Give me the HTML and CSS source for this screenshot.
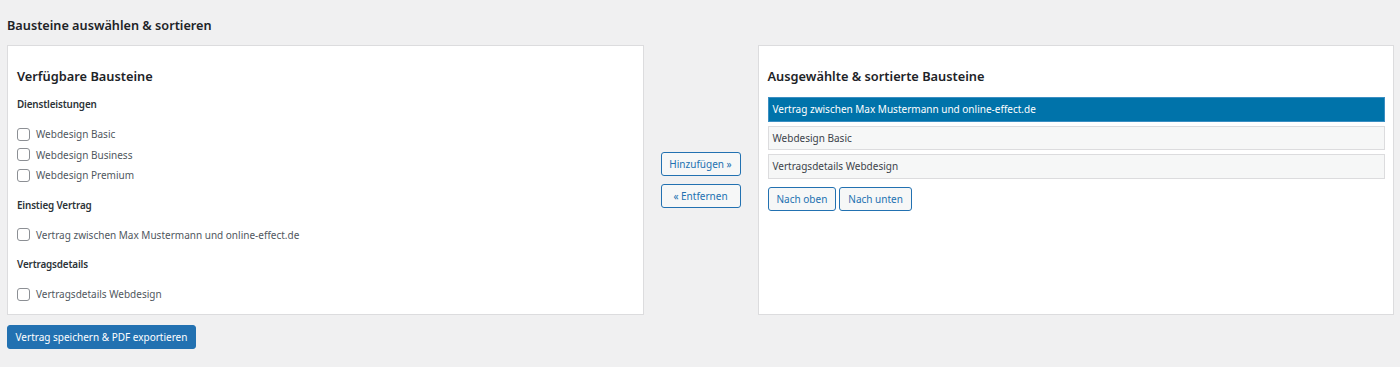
FILE: index.html
```html
<!DOCTYPE html>
<html lang="de">
<head>
<meta charset="utf-8">
<title>Bausteine auswählen &amp; sortieren</title>
<link rel="stylesheet" href="styles.css">
</head>
<body>
<div class="wrap">
  <h2 class="page-title">Bausteine auswählen &amp; sortieren</h2>
  <div class="columns">
    <div class="panel">
      <h3 class="panel-title">Verfügbare Bausteine</h3>
      <div class="group">
        <div class="group-label">Dienstleistungen</div>
        <label class="check-row"><input type="checkbox" class="cb"><span>Webdesign Basic</span></label>
        <label class="check-row"><input type="checkbox" class="cb"><span>Webdesign Business</span></label>
        <label class="check-row"><input type="checkbox" class="cb"><span>Webdesign Premium</span></label>
      </div>
      <div class="group">
        <div class="group-label">Einstieg Vertrag</div>
        <label class="check-row"><input type="checkbox" class="cb"><span>Vertrag zwischen Max Mustermann und online-effect.de</span></label>
      </div>
      <div class="group">
        <div class="group-label">Vertragsdetails</div>
        <label class="check-row"><input type="checkbox" class="cb"><span>Vertragsdetails Webdesign</span></label>
      </div>
    </div>
    <div class="mid">
      <button class="btn btn-mid">Hinzufügen »</button>
      <button class="btn btn-mid">« Entfernen</button>
    </div>
    <div class="panel">
      <h3 class="panel-title">Ausgewählte &amp; sortierte Bausteine</h3>
      <ul class="sel-list">
        <li class="sel-item active">Vertrag zwischen Max Mustermann und online-effect.de</li>
        <li class="sel-item">Webdesign Basic</li>
        <li class="sel-item">Vertragsdetails Webdesign</li>
      </ul>
      <div class="order-btns">
        <button class="btn">Nach oben</button>
        <button class="btn">Nach unten</button>
      </div>
    </div>
  </div>
  <button class="btn-primary">Vertrag speichern &amp; PDF exportieren</button>
</div>
</body>
</html>
```

FILE: styles.css
```css
html, body {
  margin: 0;
  padding: 0;
  background: #f0f0f1;
}
body {
  font-family: "Noto Sans", "Open Sans", sans-serif;
  color: #3c434a;
  font-size: 10px;
}
.wrap {
  padding: 15px 6px 0 7px;
}
.page-title {
  margin: 0 0 10px;
  font-size: 12.7px;
  line-height: 20px;
  font-weight: 600;
  color: #1d2327;
}
.columns {
  display: grid;
  grid-template-columns: 1fr 80px 1fr;
  column-gap: 17px;
  align-items: stretch;
}
.panel {
  background: #fff;
  border: 1px solid #dcdcde;
  padding: 20px 8px 9px 9px;
  min-height: 238px;
}
.panel-title {
  margin: 0;
  font-size: 12.8px;
  line-height: 20px;
  font-weight: 600;
  color: #1d2327;
}
.group-label {
  font-weight: 600;
  font-size: 9.9px;
  letter-spacing: -0.15px;
  line-height: 16px;
  color: #2c3338;
  margin: 11px 0 12px;
}
.group:first-of-type .group-label {
  margin-top: 10px;
}
.check-row {
  display: flex;
  align-items: center;
  height: 20.5px;
  gap: 6px;
  color: #50575e;
}
.cb {
  appearance: none;
  -webkit-appearance: none;
  margin: 0;
  width: 13px;
  height: 13px;
  border: 1px solid #8c8f94;
  border-radius: 3px;
  background: #fff;
  flex: none;
}
.mid {
  display: flex;
  flex-direction: column;
  justify-content: center;
  gap: 8px;
}
.btn {
  font-family: inherit;
  font-size: 10px;
  height: 24px;
  padding: 0 8px;
  border: 1px solid #2271b1;
  border-radius: 3px;
  background: #f6f7f7;
  color: #2271b1;
  cursor: pointer;
}
.btn-mid {
  width: 80px;
  padding: 0;
}
.sel-list {
  list-style: none;
  margin: 11px 0 0;
  padding: 0;
}
.sel-item {
  height: 24.5px;
  box-sizing: border-box;
  border: 1px solid #dcdcde;
  background: #f6f7f7;
  padding: 0 4px;
  display: flex;
  align-items: center;
  color: #3c434a;
  margin-bottom: 4px;
}
.sel-item.active {
  background: #0073aa;
  border-color: #3b8ec2;
  color: #fff;
}
.order-btns {
  display: flex;
  gap: 3px;
  margin-top: 8.5px;
}
.btn-primary {
  margin-top: 10px;
  font-family: inherit;
  font-size: 10px;
  height: 24px;
  width: 189px;
  padding: 0;
  border: 1px solid #2271b1;
  border-radius: 3px;
  background: #2271b1;
  color: #fff;
}
```
